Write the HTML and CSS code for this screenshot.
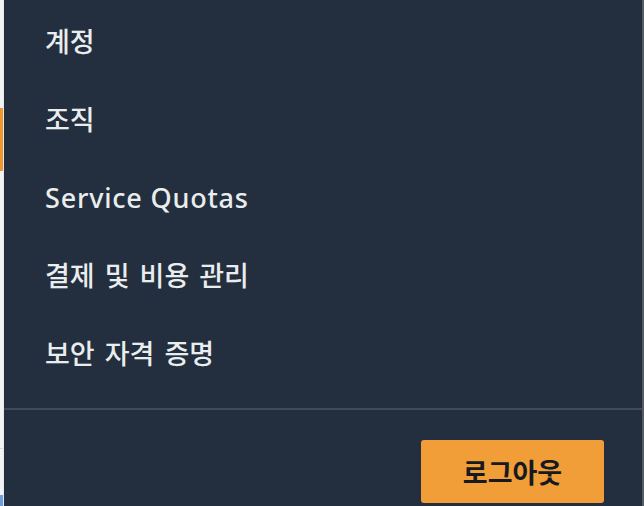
FILE: index.html
```html
<!DOCTYPE html>
<html lang="ko">
<head>
<meta charset="utf-8">
<link rel="stylesheet" href="styles.css">
</head>
<body>
<div class="page">
  <div class="side">
    <div class="side-accent"></div>
    <div class="side-rule"></div>
    <div class="side-link"></div>
  </div>
  <div class="menu">
    <ul class="items">
      <li class="item">계정</li>
      <li class="item">조직</li>
      <li class="item item-latin">Service Quotas</li>
      <li class="item">결제 및 비용 관리</li>
      <li class="item">보안 자격 증명</li>
    </ul>
    <div class="divider"></div>
    <div class="footer">
      <button class="logout">로그아웃</button>
    </div>
  </div>
  <div class="scroll"></div>
</div>
</body>
</html>
```
FILE: styles.css
```css
html, body {
  margin: 0;
  padding: 0;
  width: 644px;
  height: 506px;
  overflow: hidden;
  background: #232f3e;
}
.page {
  display: flex;
  width: 644px;
  height: 506px;
}
.side {
  width: 3px;
  flex: none;
  background: #f2f3f3;
  border-right: 1px solid #e4e6e8;
  display: flex;
  flex-direction: column;
}
.side-accent {
  margin-top: 108px;
  height: 63px;
  background: #f0972f;
}
.side-rule {
  margin-top: 277px;
  height: 1px;
  background: #d5dbdb;
}
.side-link {
  margin-top: 46px;
  height: 11px;
  background: #4d88d6;
  opacity: 0.8;
}
.menu {
  flex: 1;
  background: #232f3e;
  display: flex;
  flex-direction: column;
  font-family: "Noto Sans", "Noto Sans CJK KR", sans-serif;
}
.items {
  list-style: none;
  margin: 3px 0 0 0;
  padding: 0;
}
.item {
  height: 78px;
  line-height: 78px;
  padding-left: 41px;
  font-size: 27px;
  font-weight: 500;
  word-spacing: 3px;
  color: #eaeded;
  white-space: nowrap;
}
.item-latin {
  letter-spacing: 0.8px;
  word-spacing: 0;
}
.divider {
  margin-top: 15px;
  height: 2px;
  background: #414a56;
}
.footer {
  display: flex;
  justify-content: flex-end;
  padding: 30px 38px 0 0;
}
.logout {
  width: 183px;
  height: 63px;
  border: none;
  border-radius: 3px;
  background: #f19e39;
  color: #16191f;
  font-family: "Noto Sans CJK KR", sans-serif;
  font-weight: 700;
  font-size: 27px;
  padding: 0;
}
.scroll {
  width: 2px;
  flex: none;
  background: #545b64;
}
```
